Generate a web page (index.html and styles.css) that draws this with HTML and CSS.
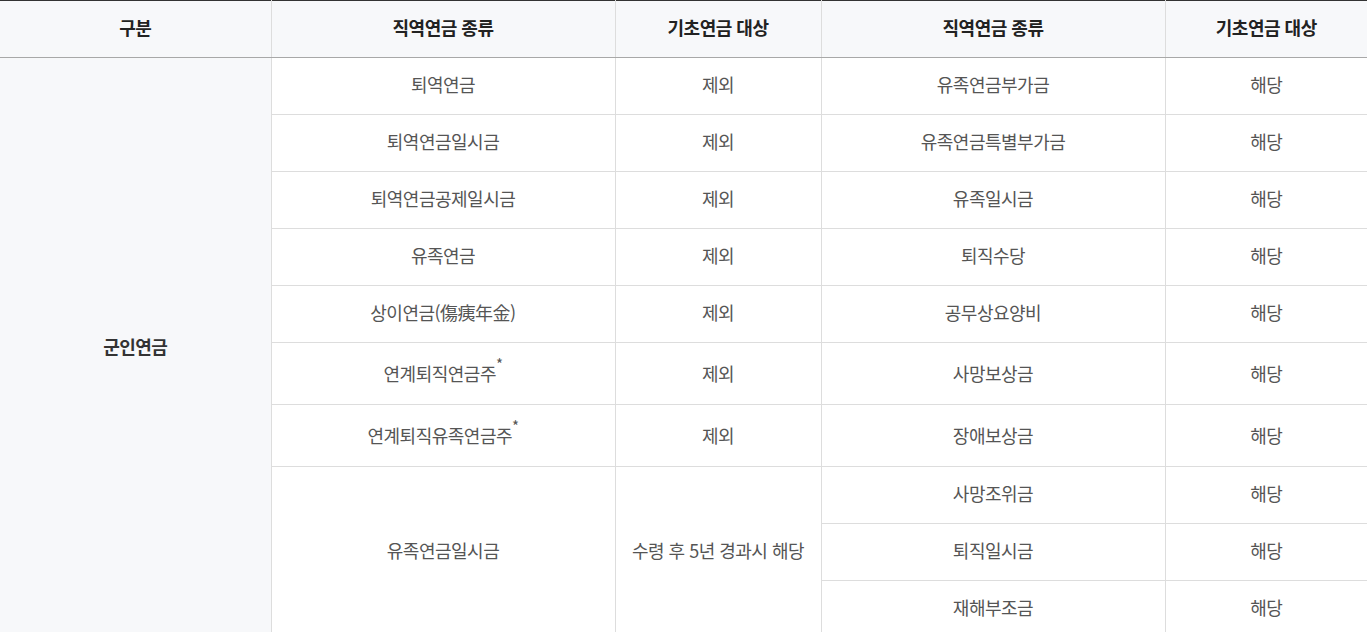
FILE: index.html
```html
<!DOCTYPE html>
<html lang="ko">
<head>
<meta charset="utf-8">
<link rel="stylesheet" href="styles.css">
</head>
<body>
<table class="tbl">
  <colgroup>
    <col class="c1"><col class="c2"><col class="c3"><col class="c4"><col class="c5">
  </colgroup>
  <thead>
    <tr>
      <th>구분</th>
      <th>직역연금 종류</th>
      <th>기초연금 대상</th>
      <th>직역연금 종류</th>
      <th>기초연금 대상</th>
    </tr>
  </thead>
  <tbody>
    <tr>
      <td rowspan="10" class="group">군인연금</td>
      <td>퇴역연금</td><td>제외</td><td>유족연금부가금</td><td>해당</td>
    </tr>
    <tr><td>퇴역연금일시금</td><td>제외</td><td>유족연금특별부가금</td><td>해당</td></tr>
    <tr><td>퇴역연금공제일시금</td><td>제외</td><td>유족일시금</td><td>해당</td></tr>
    <tr><td>유족연금</td><td>제외</td><td>퇴직수당</td><td>해당</td></tr>
    <tr><td>상이연금(傷痍年金)</td><td>제외</td><td>공무상요양비</td><td>해당</td></tr>
    <tr class="has-note"><td>연계퇴직연금주<sup>*</sup></td><td>제외</td><td>사망보상금</td><td>해당</td></tr>
    <tr class="has-note"><td>연계퇴직유족연금주<sup>*</sup></td><td>제외</td><td>장애보상금</td><td>해당</td></tr>
    <tr>
      <td rowspan="3">유족연금일시금</td>
      <td rowspan="3">수령 후 5년 경과시 해당</td>
      <td>사망조위금</td><td>해당</td>
    </tr>
    <tr><td>퇴직일시금</td><td>해당</td></tr>
    <tr><td>재해부조금</td><td>해당</td></tr>
  </tbody>
</table>
</body>
</html>
```

FILE: styles.css
```css
html, body {
  margin: 0;
  padding: 0;
  background: #fff;
}
body {
  font-family: "Noto Sans CJK KR", "Noto Sans", sans-serif;
}
.tbl {
  width: 1367px;
  border-collapse: collapse;
  table-layout: fixed;
  border-top: 1px solid #333;
}
.c1 { width: 271px; }
.c2 { width: 344px; }
.c3 { width: 206px; }
.c4 { width: 344px; }
.c5 { width: 202px; }
.tbl th {
  background: #f7f8fa;
  color: #222;
  font-weight: 700;
  font-size: 18px;
  letter-spacing: -0.5px;
  line-height: 26px;
  height: 57px;
  padding: 0 10px 4px;
  box-sizing: border-box;
  border-left: 1px solid #ddd;
  border-bottom: 1px solid #a8a8a8;
  text-align: center;
}
.tbl th:first-child { border-left: 0; }
.tbl td {
  color: #555;
  font-size: 18px;
  letter-spacing: -0.5px;
  line-height: 26px;
  padding: 13px 10px 17px;
  border-left: 1px solid #ddd;
  border-bottom: 1px solid #ddd;
  text-align: center;
  vertical-align: middle;
}
.tbl tr.has-note td {
  padding-top: 17px;
  padding-bottom: 18px;
}
.tbl td.group {
  border-left: 0;
  background: #f7f8fa;
  color: #333;
  font-weight: 700;
  padding-top: 0;
  padding-bottom: 4px;
}
.tbl sup {
  font-size: 15px;
  line-height: 0;
  position: relative;
  top: -4px;
}
```
